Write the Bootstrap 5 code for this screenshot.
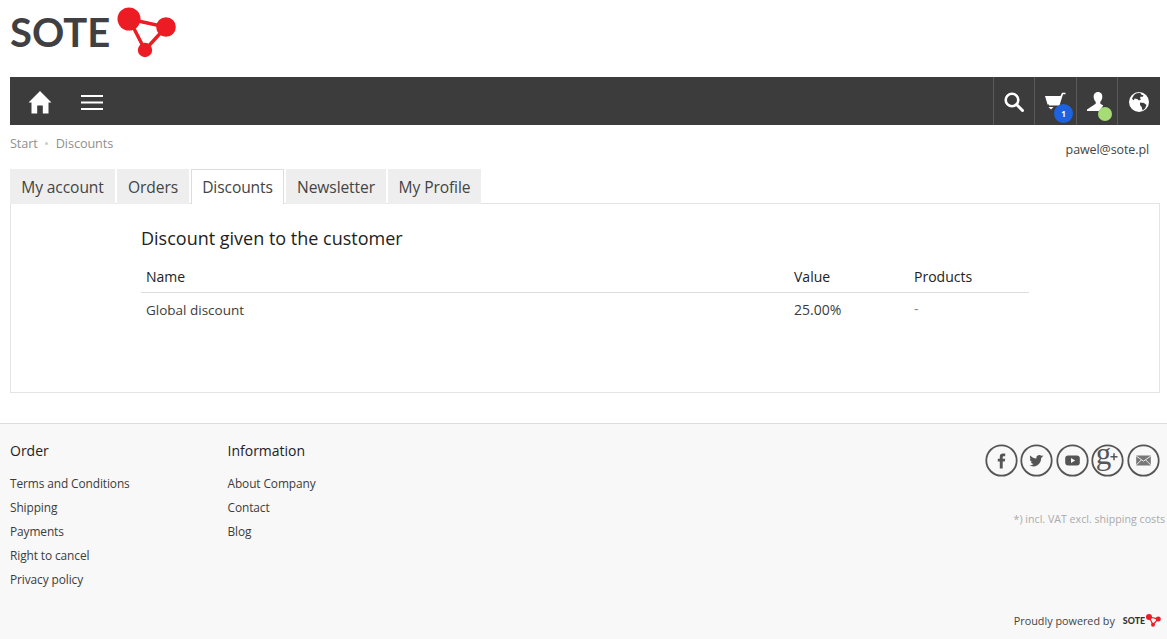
<!DOCTYPE html>
<html lang="en">
<head>
<meta charset="utf-8">
<title>Discounts</title>
<link href="https://cdn.jsdelivr.net/npm/bootstrap@5.3.0/dist/css/bootstrap.min.css" rel="stylesheet">
<style>
html,body{height:100%}
body{font-family:"Open Sans",sans-serif;font-size:14px;color:#3c3c3c;background:#fff;overflow:hidden;letter-spacing:-.1px}
a{color:inherit;text-decoration:none}
.shop-wrap{padding:0 7px 0 10px}
.logo-box{height:77px;gap:7px;padding-top:7px}
.logo-word{font-family:Lato,sans-serif;font-weight:700;font-size:40px;line-height:1;color:#404042;letter-spacing:0;margin-top:5px}
.top-bar{height:48px;background:#3c3c3c}
.bar-left{padding-left:18px;gap:29px}
.bar-left svg{margin-top:2px}
.bar-cell{width:41px;height:48px;border-left:1px solid #5a5a5a;position:relative}
.bar-cell.wide-cell{width:42px}
.bar-cell.end-cell{width:43px}
.bar-cell svg{margin-top:2px}
.count-dot{position:absolute;left:19px;top:27px;width:19px;height:19px;border-radius:50%;background:#1f62e0;color:#fff;font-size:8px;font-weight:700;line-height:19px;text-align:center;letter-spacing:0}
.on-dot{position:absolute;left:21px;top:30px;width:14px;height:14px;border-radius:50%;background:#a5dc75}
.crumb-row{height:44px;font-size:12.7px}
.crumb-list{padding-top:9px;color:#8f8f8f;gap:7.5px}
.crumb-sep{width:3px;height:3px;border-radius:50%;background:#ccc;margin-top:8px}
.user-mail{padding-top:16px;padding-right:11px;font-size:12.5px;color:#444}
.tab-row{gap:2px;position:relative;z-index:1;margin-bottom:-1px}
.tab-item{height:35px;background:#eee;font-size:15.6px;line-height:36px;color:#444;text-align:center}
.tab-item:nth-child(1){width:105px}
.tab-item:nth-child(2){width:72px}
.tab-item:nth-child(3){width:93px}
.tab-item:nth-child(4){width:100px}
.tab-item:nth-child(5){width:93px}
.tab-item.is-open{background:#fff;border:1px solid #ddd;border-bottom:0;line-height:34px}
.tab-body{height:190px;border:1px solid #e4e4e4;padding:22px 130px 0 130px}
.disc-title{font-size:18px;font-weight:400;color:#222;line-height:24px;margin:0 0 14px;letter-spacing:0}
.disc-grid{width:888px;margin:0}
.disc-grid th,.disc-grid td{padding:0 5px;background:none;border:0;font-size:14px;letter-spacing:0;color:#3c3c3c}
.disc-grid th{font-weight:400;color:#222;height:28px;padding-top:3px;vertical-align:top;border-bottom:1px solid #ddd;line-height:19px}
.disc-grid td{padding-top:7px;line-height:20px}
.disc-grid td.name-cell{font-size:13.5px}
.disc-grid td.none-cell{color:#888;padding-top:6px}
.page-foot{margin-top:30px;height:216px;background:#f8f8f8;border-top:1px solid #ddd;padding:17px 2px 0 10px;position:relative}
.foot-col{width:217.5px}
.foot-head{font-size:14px;color:#222;line-height:20px;margin-bottom:10px;letter-spacing:0}
.foot-link{font-size:11.9px;line-height:24px;color:#3c3c3c}
.social-row{gap:2.6px;padding-right:5px;margin-top:3px}
.social-row svg{overflow:visible}
.vat-note{font-size:10.65px;color:#aaa;margin-top:34px;line-height:16px;letter-spacing:0}
.powered{position:absolute;right:6px;bottom:10px;font-size:10.8px;color:#444;gap:8px;letter-spacing:0}
.mini-word{font-family:Lato,sans-serif;font-weight:900;font-size:8.8px;color:#333}
.mini-set{gap:1px}
</style>
</head>
<body>
<div class="shop-wrap">
  <div class="logo-box d-flex align-items-start">
    <span class="logo-word">SOTE</span>
    <svg width="60" height="52" viewBox="117 7 60 52">
      <path d="M129 19 L166 27 L145 50 Z" fill="none" stroke="#ed1c24" stroke-width="3.4"/>
      <circle cx="129" cy="19" r="11.500" fill="#ed1c24"/>
      <circle cx="166" cy="27" r="9.800" fill="#ed1c24"/>
      <circle cx="145" cy="50" r="7.200" fill="#ed1c24"/>
    </svg>
  </div>

  <nav class="top-bar d-flex align-items-center justify-content-between">
    <div class="bar-left d-flex align-items-center">
      <svg width="24" height="23" viewBox="0 0 24 23"><path fill="#fff" d="M12 0 L23.500 11.500 L20.500 11.500 L20.500 22.500 L14.800 22.500 L14.800 14.500 L9.200 14.500 L9.200 22.500 L3.500 22.500 L3.500 11.500 L.5 11.500 Z"/></svg>
      <svg width="22" height="15" viewBox="0 0 22 15"><path fill="#fff" d="M0 0h22v2H0zM0 6.500h22v2H0zM0 13h22v2H0z"/></svg>
    </div>
    <div class="d-flex">
      <a href="#" class="bar-cell d-flex align-items-center justify-content-center"><svg width="20" height="20" viewBox="0 0 20 20"><circle cx="8" cy="8" r="6.300" fill="none" stroke="#fff" stroke-width="2.600"/><path d="M12.500 12.500l6 6" stroke="#fff" stroke-width="3" stroke-linecap="round"/></svg></a>
      <a href="#" class="bar-cell wide-cell d-flex align-items-center justify-content-center"><svg width="21" height="20" viewBox="0 0 21 20" style="margin-right:1px"><path fill="#fff" d="M0 4h15.500l-2 8.500H2.500zM15.500 4L17 .8h3.500v1.400H18L14.500 13.500H4v-1z"/><path fill="#fff" d="M3.500 15h5l-2.500 2.500z"/></svg><span class="count-dot">1</span></a>
      <a href="#" class="bar-cell d-flex align-items-center justify-content-center"><svg width="21" height="20" viewBox="0 0 21 20"><path fill="#fff" d="M11 0c3 0 4.600 2.400 4.300 5.200-.2 2-1 3.600-2 4.600v2l3 1.800-4 5.400H0v-1.500l8.700-5.700V9.800c-1-1-1.800-2.600-2-4.600C6.400 2.400 8 0 11 0z"/></svg><span class="on-dot"></span></a>
      <a href="#" class="bar-cell end-cell d-flex align-items-center justify-content-center"><svg width="20" height="20" viewBox="0 0 20 20"><circle cx="10" cy="10" r="10" fill="#fff"/><path fill="#3c3c3c" d="M7 1.500l4-.7 1.500 2 2 .5-1 1.800-1.700-.5-.8 1.400 1 1.500-2 1-1.800-1.500-2.500-.5-1.200 2L3 6.500 5 3zM11 10.500l4 .5 2.500 2-1.500 3.500-2.500 2-.8-3.500-1.700-2z"/></svg></a>
    </div>
  </nav>

  <div class="crumb-row d-flex justify-content-between">
    <div class="crumb-list d-flex align-items-start"><a href="#">Start</a><span class="crumb-sep"></span><a href="#">Discounts</a></div>
    <div class="user-mail">pawel@sote.pl</div>
  </div>

  <div class="tab-row d-flex align-items-end">
    <a href="#" class="tab-item">My account</a>
    <a href="#" class="tab-item">Orders</a>
    <a href="#" class="tab-item is-open">Discounts</a>
    <a href="#" class="tab-item">Newsletter</a>
    <a href="#" class="tab-item">My Profile</a>
  </div>
  <section class="tab-body">
    <h2 class="disc-title">Discount given to the customer</h2>
    <table class="table disc-grid">
      <thead><tr><th style="width:648px">Name</th><th style="width:120px">Value</th><th>Products</th></tr></thead>
      <tbody><tr><td class="name-cell">Global discount</td><td>25.00%</td><td class="none-cell">-</td></tr></tbody>
    </table>
  </section>
</div>

<footer class="page-foot d-flex justify-content-between">
  <div class="d-flex">
    <div class="foot-col">
      <div class="foot-head">Order</div>
      <a href="#" class="foot-link d-block">Terms and Conditions</a>
      <a href="#" class="foot-link d-block">Shipping</a>
      <a href="#" class="foot-link d-block">Payments</a>
      <a href="#" class="foot-link d-block">Right to cancel</a>
      <a href="#" class="foot-link d-block">Privacy policy</a>
    </div>
    <div class="foot-col">
      <div class="foot-head">Information</div>
      <a href="#" class="foot-link d-block">About Company</a>
      <a href="#" class="foot-link d-block">Contact</a>
      <a href="#" class="foot-link d-block">Blog</a>
    </div>
  </div>
  <div class="d-flex flex-column align-items-end">
    <div class="social-row d-flex">
      <svg width="33" height="33" viewBox="0 0 33 33"><circle cx="16.500" cy="16.500" r="15.200" fill="none" stroke="#555" stroke-width="1.800"/><path fill="#555" d="M14.800 24.500v-7h-2v-2.700h2v-2c0-2.200 1.200-3.300 3.200-3.300h2.200v2.700h-1.300c-.9 0-1.200.4-1.200 1.100v1.500h2.500l-.4 2.700h-2.100v7z"/></svg>
      <svg width="33" height="33" viewBox="0 0 33 33"><circle cx="16.500" cy="16.500" r="15.200" fill="none" stroke="#555" stroke-width="1.800"/><path fill="#555" transform="translate(3.300 3.300) scale(.8)" d="M25.500 11.200c-.7.300-1.400.5-2.100.6.800-.5 1.300-1.200 1.600-2-.7.400-1.500.7-2.300.9-1.400-1.500-3.700-1.500-5.200-.1-1 .9-1.400 2.200-1.100 3.500-3-.1-5.700-1.500-7.600-3.800-1 1.700-.5 3.800 1.100 4.900-.6 0-1.200-.2-1.700-.5 0 1.800 1.200 3.300 3 3.600-.5.200-1.100.2-1.700.1.500 1.500 1.900 2.500 3.400 2.500-1.600 1.300-3.600 1.800-5.400 1.600 4.500 2.800 10.400 1.400 13.200-3.100 1.100-1.700 1.600-3.700 1.500-5.700.7-.5 1.300-1.100 1.800-1.800z"/></svg>
      <svg width="33" height="33" viewBox="0 0 33 33"><circle cx="16.500" cy="16.500" r="15.200" fill="none" stroke="#555" stroke-width="1.800"/><rect x="9.200" y="11.500" width="14.600" height="10" rx="3" fill="#555"/><path fill="#f8f8f8" d="M15 14v5l4.200-2.500z"/></svg>
      <svg width="33" height="33" viewBox="0 0 33 33"><circle cx="16.500" cy="16.500" r="15.200" fill="none" stroke="#555" stroke-width="1.800"/><text x="12.500" y="20" font-family="Liberation Serif,serif" font-size="31" fill="#555" text-anchor="middle">g</text><path d="M19.500 12.700h7M23 9.200v7" stroke="#555" stroke-width="1.500"/></svg>
      <svg width="33" height="33" viewBox="0 0 33 33"><circle cx="16.500" cy="16.500" r="15.200" fill="none" stroke="#555" stroke-width="1.800"/><rect x="9.200" y="11.500" width="14.600" height="10" fill="#777"/><path d="M9.200 12l7.300 5.200 7.300-5.200M9.200 21l5.300-5.200M23.800 21l-5.300-5.200" fill="none" stroke="#f8f8f8" stroke-width=".9"/></svg>
    </div>
    <div class="vat-note">*) incl. VAT excl. shipping costs</div>
  </div>
  <div class="powered d-flex align-items-center">
    <span>Proudly powered by</span>
    <span class="mini-set d-flex align-items-center"><span class="mini-word">SOTE</span>
    <svg width="15" height="13" viewBox="117 7 60 52"><path d="M129 19 L166 27 L145 50 Z" fill="none" stroke="#ed1c24" stroke-width="5"/><circle cx="129" cy="19" r="12" fill="#ed1c24"/><circle cx="166" cy="27" r="10" fill="#ed1c24"/><circle cx="145" cy="50" r="8" fill="#ed1c24"/></svg></span>
  </div>
</footer>
<script src="https://cdn.jsdelivr.net/npm/bootstrap@5.3.0/dist/js/bootstrap.bundle.min.js"></script>
</body>
</html>
